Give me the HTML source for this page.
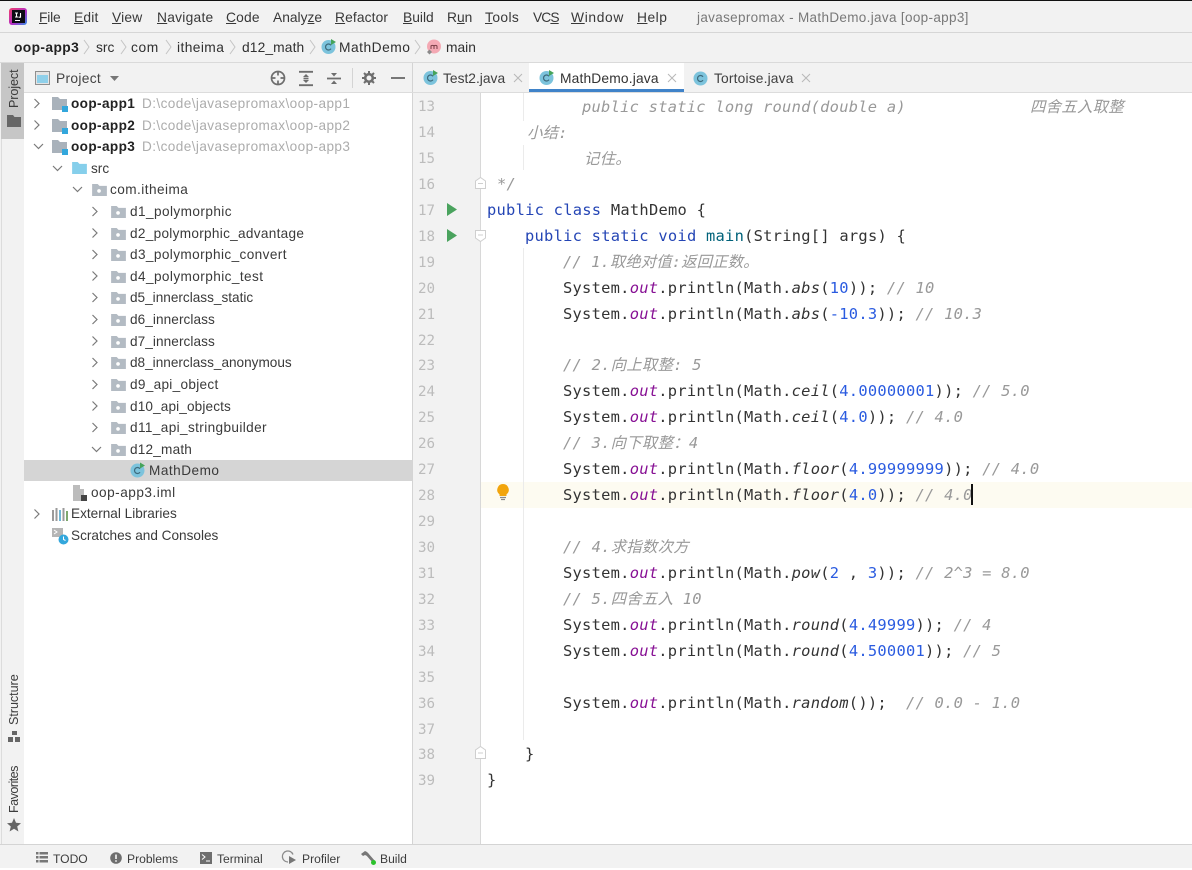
<!DOCTYPE html>
<html lang="zh"><head><meta charset="utf-8"><title>MathDemo</title>
<style>
html,body{margin:0;padding:0}
body{width:1192px;height:870px;position:relative;overflow:hidden;background:#f2f2f2;font-family:"Liberation Sans","Noto Sans CJK SC",sans-serif;color:#333}
#w{position:absolute;left:0;top:0;width:1192px;height:870px;filter:blur(.3px)}
.a,.t,.r,.l,.n{position:absolute;white-space:pre}
.a{display:block}
.t{font-size:13.6px;line-height:20px;height:20px}
u{text-decoration-thickness:1px;text-underline-offset:1px}
.m{top:8px;font-size:13.8px;color:#383838}
.c{top:38px;font-size:13.8px;color:#303030}
.tab{top:69px;font-size:13.8px;color:#404040}
.r{font-size:13.6px;line-height:20px;color:#3a3a3a}
.s{top:849px;font-size:12.1px;color:#3c3c3c}
.l{font-family:"DejaVu Sans Mono","Noto Sans CJK SC",monospace;font-size:15.4px;letter-spacing:.26px;line-height:26px;color:#333}
.n{font-family:"DejaVu Sans Mono",monospace;font-size:14.2px;line-height:26px;color:#bcbcbc;left:418px}
.k{color:#2445b5}.f{color:#871094;font-style:italic}.i{font-style:italic}.d{color:#2a5be0}.g{color:#999;font-style:italic}.p{color:#00627a}
.v{position:absolute;transform:rotate(-90deg);transform-origin:left top;font-size:12.6px;color:#3c3c3c;white-space:pre}
.e{letter-spacing:.41px}
svg{position:absolute;overflow:visible}
</style></head><body><div id="w">
<div class="a" style="left:0;top:0;width:1192px;height:1px;background:#111"></div>
<div class="a" style="left:0;top:32px;width:1192px;height:1px;background:#d6d6d6"></div>
<div class="a" style="left:0;top:62px;width:1192px;height:1px;background:#dadada"></div>
<div class="a" style="left:1px;top:63px;width:1px;height:781px;background:#dcdcdc"></div>
<div class="a" style="left:24px;top:92px;width:388px;height:752px;background:#fff"></div>
<div class="a" style="left:412px;top:63px;width:1px;height:781px;background:#d4d4d4"></div>
<div class="a" style="left:1px;top:63px;width:23px;height:76px;background:#c6c6c6"></div>
<div class="a" style="left:24px;top:92px;width:1168px;height:1px;background:#dcdcdc"></div>
<div class="a" style="left:481px;top:93px;width:711px;height:751px;background:#fff"></div>
<div class="a" style="left:480px;top:93px;width:1px;height:751px;background:#d8d8d8"></div>
<div class="a" style="left:481px;top:482px;width:711px;height:26px;background:#fdfbf1"></div>
<div class="a" style="left:523px;top:93px;width:1px;height:28px;background:#ebebeb"></div>
<div class="a" style="left:523px;top:145px;width:1px;height:25px;background:#ebebeb"></div>
<div class="a" style="left:523px;top:248px;width:1px;height:492px;background:#ebebeb"></div>
<div class="a" style="left:0;top:844px;width:1192px;height:1px;background:#d4d4d4"></div>
<div class="a" style="left:0;top:868px;width:1192px;height:2px;background:#fff"></div>

<!-- logo -->
<svg style="left:9px;top:8px" width="18" height="17" viewBox="0 0 18 17"><defs><linearGradient id="lg" x1="0" y1="0" x2="1" y2="1"><stop offset="0" stop-color="#f0406a"/><stop offset=".55" stop-color="#b62cc4"/><stop offset="1" stop-color="#2f8fe8"/></linearGradient></defs><rect x="0" y="0" width="18" height="17" rx="3" fill="url(#lg)"/><rect x="3" y="2" width="13" height="13" fill="#0c0c14"/><path d="M6 5h3M7.500 5v4M6 9h3M11.500 5v4.200h-2M6 12.500h5" stroke="#fff" stroke-width="1.100" fill="none"/></svg>

<!-- menu -->
<div class="t m" style="left:39px;letter-spacing:-.2px"><u>F</u>ile</div>
<div class="t m" style="left:74px;letter-spacing:.2px"><u>E</u>dit</div>
<div class="t m" style="left:112px;letter-spacing:.2px"><u>V</u>iew</div>
<div class="t m" style="left:157px;letter-spacing:.25px"><u>N</u>avigate</div>
<div class="t m" style="left:226px;letter-spacing:.2px"><u>C</u>ode</div>
<div class="t m" style="left:273px">Analy<u>z</u>e</div>
<div class="t m" style="left:335px;letter-spacing:.12px"><u>R</u>efactor</div>
<div class="t m" style="left:403px"><u>B</u>uild</div>
<div class="t m" style="left:447px">R<u>u</u>n</div>
<div class="t m" style="left:485px;letter-spacing:.4px"><u>T</u>ools</div>
<div class="t m" style="left:533px;letter-spacing:-.9px">VC<u>S</u></div>
<div class="t m" style="left:571px;letter-spacing:.65px"><u>W</u>indow</div>
<div class="t m" style="left:637px;letter-spacing:.5px"><u>H</u>elp</div>
<div class="t" style="left:697px;top:8px;font-size:13.5px;color:#787878;letter-spacing:.33px">javasepromax - MathDemo.java [oop-app3]</div>

<!-- breadcrumb -->
<div class="t c" style="left:14px;font-weight:bold;color:#222;letter-spacing:.38px">oop-app3</div>
<div class="t c" style="left:96px">src</div>
<div class="t c" style="left:131px;letter-spacing:.6px">com</div>
<div class="t c" style="left:177px;letter-spacing:.4px">itheima</div>
<div class="t c" style="left:242px;letter-spacing:.12px">d12_math</div>
<div class="t c" style="left:339px;letter-spacing:.5px">MathDemo</div>
<div class="t c" style="left:446px">main</div>
<svg style="left:0;top:0" width="480" height="62" fill="none" stroke="#c4c4c4" stroke-width="1"><path d="M84 40l5 7-5 7M121 40l5 7-5 7M166 40l5 7-5 7M230 40l5 7-5 7M310 40l5 7-5 7M415 40l5 7-5 7"/></svg>
<svg style="left:321px;top:39px" width="16" height="16" viewBox="0 0 16 16"><circle cx="7.500" cy="8" r="7" fill="#7cc3dc"/><path d="M10 6.300a3 3 0 1 0 0 3.400" stroke="#3d6a7c" fill="none" stroke-width="1.200"/><path d="M10 0l5 3-5 3z" fill="#45a35a"/></svg>
<svg style="left:426px;top:39px" width="16" height="16" viewBox="0 0 16 16"><circle cx="8" cy="7.500" r="7" fill="#f4a9b4"/><path d="M5 10V6.500M5 7.500c0-1.500 3-1.500 3 0V10M8 7.500c0-1.500 3-1.500 3 0V10" stroke="#7a3d46" fill="none" stroke-width="1"/><path d="M1 13l2.500-2.500L6 13l-2.500 2.500z" fill="#8a8a8a"/></svg>

<!-- left stripe -->
<div class="v" style="left:7px;top:108px;letter-spacing:-.1px">Project</div>
<svg style="left:7px;top:115px" width="14" height="12" viewBox="0 0 14 12"><path d="M0 0h6l1.500 2H14v10H0z" fill="#666"/></svg>
<div class="v" style="left:7px;top:725px;letter-spacing:-.05px">Structure</div>
<svg style="left:8px;top:731px" width="13" height="12" viewBox="0 0 13 12"><rect x="4" y="0" width="5" height="4" fill="#666"/><rect x="0" y="6" width="5" height="5" fill="#666"/><rect x="7" y="6" width="5" height="5" fill="#666"/></svg>
<div class="v" style="left:7px;top:813px;letter-spacing:-.55px">Favorites</div>
<svg style="left:7px;top:818px" width="14" height="14" viewBox="0 0 14 14"><path d="M7 0l2 4.800 5 .4-3.800 3.300 1.200 5L7 10.800 2.600 13.500l1.200-5L0 5.200l5-.4z" fill="#666"/></svg>

<!-- project header -->
<svg style="left:35px;top:71px" width="15" height="14" viewBox="0 0 15 14"><rect x=".5" y=".5" width="14" height="13" fill="#e4e4e4" stroke="#8f8f8f"/><rect x="2" y="4" width="11" height="8" fill="#8fd0ea"/></svg>
<div class="t" style="left:56px;top:69px;font-size:13.8px;color:#444;letter-spacing:.3px">Project</div>
<svg style="left:110px;top:76px" width="9" height="6"><path d="M0 0h9L4.500 5z" fill="#777"/></svg>
<svg style="left:270px;top:70px" width="16" height="16" viewBox="0 0 16 16" fill="none" stroke="#6e6e6e" stroke-width="1.700"><circle cx="8" cy="8" r="6.500"/><path d="M8 1v4.500M8 10.500V15M1 8h4.500M10.500 8H15"/></svg>
<svg style="left:299px;top:71px" width="14" height="15" viewBox="0 0 14 15" fill="none" stroke="#6e6e6e" stroke-width="1.800"><path d="M0 .8h14M0 14.200h14M4.500 7.500h5"/><path d="M7 3l3 3H4zM7 12l3-3H4z" fill="#6e6e6e" stroke="none"/></svg>
<svg style="left:327px;top:71px" width="14" height="15" viewBox="0 0 14 15" fill="none" stroke="#6e6e6e" stroke-width="1.800"><path d="M0 7.500h14"/><path d="M7 5.500l3-3.500H4zM7 9.500l3 3.500H4z" fill="#6e6e6e" stroke="none"/></svg>
<div class="a" style="left:352px;top:68px;width:1px;height:20px;background:#d4d4d4"></div>
<svg style="left:362px;top:71px" width="14" height="14" viewBox="0 0 14 14"><circle cx="7" cy="7" r="3.800" fill="none" stroke="#6e6e6e" stroke-width="2.600"/><path d="M7 0v3M7 11v3M0 7h3M11 7h3M2 2l2 2M10 10l2 2M12 2l-2 2M4 10l-2 2" stroke="#6e6e6e" stroke-width="2"/></svg>
<div class="a" style="left:391px;top:77px;width:14px;height:2px;background:#777"></div>

<!-- tabs -->
<div class="a" style="left:529px;top:63px;width:155px;height:26px;background:#fff"></div>
<div class="a" style="left:529px;top:89px;width:155px;height:3px;background:#4083c9"></div>
<svg style="left:423px;top:70px" width="16" height="16" viewBox="0 0 16 16"><circle cx="7.500" cy="8" r="7" fill="#7cc3dc"/><path d="M10 6.300a3 3 0 1 0 0 3.400" stroke="#3d6a7c" fill="none" stroke-width="1.200"/><path d="M10 0l5 3-5 3z" fill="#45a35a"/></svg>
<div class="t tab" style="left:443px">Test2.java</div>
<svg style="left:514px;top:74px" width="8" height="8" stroke="#b8b8b8" stroke-width="1"><path d="M0 0l8 8M8 0L0 8"/></svg>
<svg style="left:539px;top:70px" width="16" height="16" viewBox="0 0 16 16"><circle cx="7.500" cy="8" r="7" fill="#7cc3dc"/><path d="M10 6.300a3 3 0 1 0 0 3.400" stroke="#3d6a7c" fill="none" stroke-width="1.200"/><path d="M10 0l5 3-5 3z" fill="#45a35a"/></svg>
<div class="t tab" style="left:560px;color:#333;letter-spacing:.16px">MathDemo.java</div>
<svg style="left:668px;top:74px" width="8" height="8" stroke="#b8b8b8" stroke-width="1"><path d="M0 0l8 8M8 0L0 8"/></svg>
<svg style="left:693px;top:71px" width="15" height="15" viewBox="0 0 15 15"><circle cx="7.500" cy="7.500" r="7" fill="#7cc3dc"/><path d="M10 5.800a3 3 0 1 0 0 3.400" stroke="#3d6a7c" fill="none" stroke-width="1.200"/></svg>
<div class="t tab" style="left:714px;letter-spacing:.16px">Tortoise.java</div>
<svg style="left:802px;top:74px" width="8" height="8" stroke="#b8b8b8" stroke-width="1"><path d="M0 0l8 8M8 0L0 8"/></svg>

<!-- tree -->
<div class="a" style="left:24px;top:460px;width:388px;height:21px;background:#d5d5d5"></div>
<svg style="left:0;top:0" width="110" height="530" fill="none" stroke="#7a7a7a" stroke-width="1.200">
<path d="M34.500 99l4.500 4.500-4.500 4.500M34.500 120.500l4.500 4.500-4.500 4.500M34 144l4.500 4.500 4.500-4.500M53 166l4.500 4.500 4.500-4.500M73 187l4.500 4.500 4.500-4.500"/>
<path d="M92.500 207l4.500 4.500-4.500 4.500M92.500 228.500l4.500 4.500-4.500 4.500M92.500 250l4.500 4.500-4.500 4.500M92.500 271.500l4.500 4.500-4.500 4.500M92.500 293l4.500 4.500-4.500 4.500M92.500 315l4.500 4.500-4.500 4.500M92.500 336.500l4.500 4.500-4.500 4.500M92.500 358l4.500 4.500-4.500 4.500M92.500 380l4.500 4.500-4.500 4.500M92.500 401.500l4.500 4.500-4.500 4.500M92.500 423l4.500 4.500-4.500 4.500M92 447l4.500 4.500 4.500-4.500M34.500 509.500l4.500 4.500-4.500 4.500"/></svg>

<svg style="left:52px;top:97px" width="17" height="15" viewBox="0 0 17 15"><path d="M0 0h6l2 2h7v11H0z" fill="#a9b2bb"/><rect x="10" y="9" width="6" height="6" fill="#33a7dc"/></svg>
<svg style="left:52px;top:119px" width="17" height="15" viewBox="0 0 17 15"><path d="M0 0h6l2 2h7v11H0z" fill="#a9b2bb"/><rect x="10" y="9" width="6" height="6" fill="#33a7dc"/></svg>
<svg style="left:52px;top:140px" width="17" height="15" viewBox="0 0 17 15"><path d="M0 0h6l2 2h7v11H0z" fill="#a9b2bb"/><rect x="10" y="9" width="6" height="6" fill="#33a7dc"/></svg>
<svg style="left:72px;top:162px" width="15" height="12" viewBox="0 0 16 13"><path d="M0 0h6l2 2h8v11H0z" fill="#86cfeb"/></svg>
<svg style="left:91.500px;top:184px" width="15" height="12" viewBox="0 0 16 13"><path d="M0 0h6l2 2h8v11H0z" fill="#b3bbc3"/><circle cx="7.500" cy="7.500" r="2" fill="#fff"/></svg>
<svg style="left:110.500px;top:206px" width="15" height="12" viewBox="0 0 16 13"><path d="M0 0h6l2 2h8v11H0z" fill="#b3bbc3"/><circle cx="7.500" cy="7.500" r="2" fill="#fff"/></svg>
<svg style="left:110.500px;top:228px" width="15" height="12" viewBox="0 0 16 13"><path d="M0 0h6l2 2h8v11H0z" fill="#b3bbc3"/><circle cx="7.500" cy="7.500" r="2" fill="#fff"/></svg>
<svg style="left:110.500px;top:249px" width="15" height="12" viewBox="0 0 16 13"><path d="M0 0h6l2 2h8v11H0z" fill="#b3bbc3"/><circle cx="7.500" cy="7.500" r="2" fill="#fff"/></svg>
<svg style="left:110.500px;top:271px" width="15" height="12" viewBox="0 0 16 13"><path d="M0 0h6l2 2h8v11H0z" fill="#b3bbc3"/><circle cx="7.500" cy="7.500" r="2" fill="#fff"/></svg>
<svg style="left:110.500px;top:292px" width="15" height="12" viewBox="0 0 16 13"><path d="M0 0h6l2 2h8v11H0z" fill="#b3bbc3"/><circle cx="7.500" cy="7.500" r="2" fill="#fff"/></svg>
<svg style="left:110.500px;top:314px" width="15" height="12" viewBox="0 0 16 13"><path d="M0 0h6l2 2h8v11H0z" fill="#b3bbc3"/><circle cx="7.500" cy="7.500" r="2" fill="#fff"/></svg>
<svg style="left:110.500px;top:336px" width="15" height="12" viewBox="0 0 16 13"><path d="M0 0h6l2 2h8v11H0z" fill="#b3bbc3"/><circle cx="7.500" cy="7.500" r="2" fill="#fff"/></svg>
<svg style="left:110.500px;top:357px" width="15" height="12" viewBox="0 0 16 13"><path d="M0 0h6l2 2h8v11H0z" fill="#b3bbc3"/><circle cx="7.500" cy="7.500" r="2" fill="#fff"/></svg>
<svg style="left:110.500px;top:379px" width="15" height="12" viewBox="0 0 16 13"><path d="M0 0h6l2 2h8v11H0z" fill="#b3bbc3"/><circle cx="7.500" cy="7.500" r="2" fill="#fff"/></svg>
<svg style="left:110.500px;top:401px" width="15" height="12" viewBox="0 0 16 13"><path d="M0 0h6l2 2h8v11H0z" fill="#b3bbc3"/><circle cx="7.500" cy="7.500" r="2" fill="#fff"/></svg>
<svg style="left:110.500px;top:422px" width="15" height="12" viewBox="0 0 16 13"><path d="M0 0h6l2 2h8v11H0z" fill="#b3bbc3"/><circle cx="7.500" cy="7.500" r="2" fill="#fff"/></svg>
<svg style="left:110.500px;top:444px" width="15" height="12" viewBox="0 0 16 13"><path d="M0 0h6l2 2h8v11H0z" fill="#b3bbc3"/><circle cx="7.500" cy="7.500" r="2" fill="#fff"/></svg>
<svg style="left:130px;top:462px" width="16" height="16" viewBox="0 0 16 16"><circle cx="7.500" cy="8.500" r="7" fill="#7cc3dc"/><path d="M10 6.800a3 3 0 1 0 0 3.400" stroke="#3d6a7c" fill="none" stroke-width="1.200"/><path d="M10 .5l5 3-5 3z" fill="#45a35a"/></svg>
<svg style="left:73px;top:485px" width="15" height="16" viewBox="0 0 15 16"><path d="M0 0h7v4h4v12H0z" fill="#bcbcbc"/><rect x="8" y="10" width="6" height="6" fill="#444"/></svg>
<svg style="left:52px;top:507px" width="17" height="15" viewBox="0 0 17 15"><rect x="0" y="3" width="2" height="11" fill="#9a9a9a"/><rect x="3.500" y="1" width="2" height="13" fill="#9a9a9a"/><rect x="7" y="3" width="2" height="11" fill="#6fb7d6"/><rect x="10.500" y="1" width="2" height="13" fill="#9a9a9a"/><rect x="14" y="4" width="2" height="10" fill="#7ea86f"/></svg>
<svg style="left:52px;top:528px" width="17" height="17" viewBox="0 0 17 17"><rect x="0" y="0" width="11" height="9" fill="#b5b5b5"/><path d="M2 2l3 2-3 2" stroke="#fff" fill="none"/><circle cx="11.500" cy="11.500" r="5" fill="#33a7dc"/><path d="M11.500 8.500v3l2 1" stroke="#fff" fill="none"/></svg>

<div class="r" style="left:71px;top:94px;font-weight:bold;color:#222;letter-spacing:.38px">oop-app1</div><div class="r e" style="left:142px;top:94px;color:#acacac">D:\code\javasepromax\oop-app1</div>
<div class="r" style="left:71px;top:116px;font-weight:bold;color:#222;letter-spacing:.38px">oop-app2</div><div class="r e" style="left:142px;top:116px;color:#acacac">D:\code\javasepromax\oop-app2</div>
<div class="r" style="left:71px;top:137px;font-weight:bold;color:#222;letter-spacing:.38px">oop-app3</div><div class="r e" style="left:142px;top:137px;color:#acacac">D:\code\javasepromax\oop-app3</div>
<div class="r" style="left:91px;top:159px">src</div>
<div class="r" style="left:110px;top:180px;letter-spacing:.45px">com.itheima</div>
<div class="r" style="left:130px;top:202px;letter-spacing:.43px">d1_polymorphic</div>
<div class="r" style="left:130px;top:224px;letter-spacing:.3px">d2_polymorphic_advantage</div>
<div class="r" style="left:130px;top:245px;letter-spacing:.4px">d3_polymorphic_convert</div>
<div class="r" style="left:130px;top:267px;letter-spacing:.42px">d4_polymorphic_test</div>
<div class="r" style="left:130px;top:288px">d5_innerclass_static</div>
<div class="r" style="left:130px;top:310px;letter-spacing:.08px">d6_innerclass</div>
<div class="r" style="left:130px;top:332px;letter-spacing:.08px">d7_innerclass</div>
<div class="r" style="left:130px;top:353px">d8_innerclass_anonymous</div>
<div class="r" style="left:130px;top:375px;letter-spacing:.3px">d9_api_object</div>
<div class="r" style="left:130px;top:397px;letter-spacing:.13px">d10_api_objects</div>
<div class="r" style="left:130px;top:418px;letter-spacing:.38px">d11_api_stringbuilder</div>
<div class="r" style="left:130px;top:440px;letter-spacing:.2px">d12_math</div>
<div class="r" style="left:149px;top:461px;letter-spacing:.5px">MathDemo</div>
<div class="r" style="left:91px;top:483px;letter-spacing:.5px">oop-app3.iml</div>
<div class="r" style="left:71px;top:504px">External Libraries</div>
<div class="r" style="left:71px;top:526px">Scratches and Consoles</div>

<!-- line numbers -->
<div class="n" style="top:94px">13</div><div class="n" style="top:120px">14</div><div class="n" style="top:146px">15</div><div class="n" style="top:172px">16</div><div class="n" style="top:198px">17</div><div class="n" style="top:224px">18</div><div class="n" style="top:250px">19</div><div class="n" style="top:276px">20</div><div class="n" style="top:302px">21</div><div class="n" style="top:328px">22</div><div class="n" style="top:353px">23</div><div class="n" style="top:379px">24</div><div class="n" style="top:405px">25</div><div class="n" style="top:431px">26</div><div class="n" style="top:457px">27</div><div class="n" style="top:483px">28</div><div class="n" style="top:509px">29</div><div class="n" style="top:535px">30</div><div class="n" style="top:561px">31</div><div class="n" style="top:587px">32</div><div class="n" style="top:613px">33</div><div class="n" style="top:639px">34</div><div class="n" style="top:665px">35</div><div class="n" style="top:691px">36</div><div class="n" style="top:717px">37</div><div class="n" style="top:742px">38</div><div class="n" style="top:768px">39</div>

<!-- gutter icons -->
<svg style="left:447px;top:203px" width="11" height="13"><path d="M0 0l10 6.500L0 13z" fill="#4aa35e"/></svg>
<svg style="left:447px;top:229px" width="11" height="13"><path d="M0 0l10 6.500L0 13z" fill="#4aa35e"/></svg>
<svg style="left:475px;top:177px" width="11" height="12" fill="#fff" stroke="#cfcfcf"><path d="M.5 11.500V4L5.500.5l5 3.500v7.500z"/><path d="M3 6.500h5"/></svg>
<svg style="left:475px;top:230px" width="11" height="12" fill="#fff" stroke="#cfcfcf"><path d="M.5.500V8l5 3.500 5-3.500V.5z"/><path d="M3 5h5"/></svg>
<svg style="left:475px;top:746px" width="11" height="13" fill="#fff" stroke="#cfcfcf"><path d="M.5 12.500V4L5.500.5l5 3.500v8.500z"/><path d="M3 7h5"/></svg>
<svg style="left:496px;top:484px" width="14" height="17" viewBox="0 0 14 17"><path d="M7 0a5.800 5.800 0 0 1 3.500 10.400V12h-7v-1.600A5.800 5.800 0 0 1 7 0z" fill="#f2a50d"/><path d="M4 13.500h6M5 15.500h4" stroke="#8a8a8a" stroke-width="1.200"/></svg>

<!-- code -->
<div class="l g" style="left:582px;top:94px">public static long round(double a)</div>
<div class="l g" style="left:1030px;top:94px">四舍五入取整</div>
<div class="l g" style="left:527px;top:120px">小结:</div>
<div class="l g" style="left:584px;top:146px">记住。</div>
<div class="l g" style="left:497px;top:171px">*/</div>
<div class="l" style="left:487px;top:197px"><span class="k">public class</span> MathDemo {</div>
<div class="l" style="left:525px;top:223px"><span class="k">public static void</span> <span class="p">main</span>(String[] args) {</div>
<div class="l g" style="left:563px;top:249px;letter-spacing:.1px">// 1.取绝对值:返回正数。</div>
<div class="l" style="left:563px;top:275px">System.<span class="f">out</span>.println(Math.<span class="i">abs</span>(<span class="d">10</span>)); <span class="g">// 10</span></div>
<div class="l" style="left:563px;top:301px">System.<span class="f">out</span>.println(Math.<span class="i">abs</span>(<span class="d">-10.3</span>)); <span class="g">// 10.3</span></div>
<div class="l g" style="left:563px;top:352px">// 2.向上取整: 5</div>
<div class="l" style="left:563px;top:378px">System.<span class="f">out</span>.println(Math.<span class="i">ceil</span>(<span class="d">4.00000001</span>)); <span class="g">// 5.0</span></div>
<div class="l" style="left:563px;top:404px">System.<span class="f">out</span>.println(Math.<span class="i">ceil</span>(<span class="d">4.0</span>)); <span class="g">// 4.0</span></div>
<div class="l g" style="left:563px;top:430px">// 3.向下取整：4</div>
<div class="l" style="left:563px;top:456px">System.<span class="f">out</span>.println(Math.<span class="i">floor</span>(<span class="d">4.99999999</span>)); <span class="g">// 4.0</span></div>
<div class="l" style="left:563px;top:482px">System.<span class="f">out</span>.println(Math.<span class="i">floor</span>(<span class="d">4.0</span>)); <span class="g">// 4.0</span></div>
<div class="a" style="left:971px;top:484px;width:2px;height:21px;background:#111"></div>
<div class="l g" style="left:563px;top:534px">// 4.求指数次方</div>
<div class="l" style="left:563px;top:560px">System.<span class="f">out</span>.println(Math.<span class="i">pow</span>(<span class="d">2</span> , <span class="d">3</span>)); <span class="g">// 2^3 = 8.0</span></div>
<div class="l g" style="left:563px;top:586px">// 5.四舍五入 10</div>
<div class="l" style="left:563px;top:612px">System.<span class="f">out</span>.println(Math.<span class="i">round</span>(<span class="d">4.49999</span>)); <span class="g">// 4</span></div>
<div class="l" style="left:563px;top:638px">System.<span class="f">out</span>.println(Math.<span class="i">round</span>(<span class="d">4.500001</span>)); <span class="g">// 5</span></div>
<div class="l" style="left:563px;top:690px">System.<span class="f">out</span>.println(Math.<span class="i">random</span>());  <span class="g">// 0.0 - 1.0</span></div>
<div class="l" style="left:525px;top:741px">}</div>
<div class="l" style="left:487px;top:767px">}</div>

<!-- status bar -->
<svg style="left:36px;top:852px" width="12" height="11" fill="#777"><rect x="0" y="0" width="2.500" height="2.500"/><rect x="0" y="4" width="2.500" height="2.500"/><rect x="0" y="8" width="2.500" height="2.500"/><rect x="3.500" y="0" width="8.500" height="2.500"/><rect x="3.500" y="4" width="8.500" height="2.500"/><rect x="3.500" y="8" width="8.500" height="2.500"/></svg>
<div class="t s" style="left:53px">TODO</div>
<svg style="left:110px;top:852px" width="12" height="12"><circle cx="6" cy="6" r="5.800" fill="#6e6e6e"/><path d="M6 2.500v4.500M6 8.300v1.500" stroke="#fff" stroke-width="1.500"/></svg>
<div class="t s" style="left:127px">Problems</div>
<svg style="left:200px;top:852px" width="12" height="12"><rect width="12" height="12" fill="#6e6e6e"/><path d="M2 2.500l3 2.500-3 2.500M6 9h4" stroke="#fff" fill="none"/></svg>
<div class="t s" style="left:217px">Terminal</div>
<svg style="left:283px;top:851px" width="15" height="14" viewBox="0 0 15 14"><path d="M10 3.500A5.500 5.500 0 1 0 5 11" fill="none" stroke="#8a8a8a" stroke-width="1.300"/><path d="M6 5v8l7-4z" fill="#777"/></svg>
<div class="t s" style="left:302px">Profiler</div>
<svg style="left:361px;top:851px" width="16" height="15" viewBox="0 0 16 15"><path d="M0 3l4-3 2 1 2 2-2 2-2-1-2 1zM5 4l2-2 7 8-2 2z" fill="#777"/><circle cx="12.500" cy="11.500" r="2.500" fill="#2cc22c"/></svg>
<div class="t s" style="left:380px">Build</div>
</div></body></html>
